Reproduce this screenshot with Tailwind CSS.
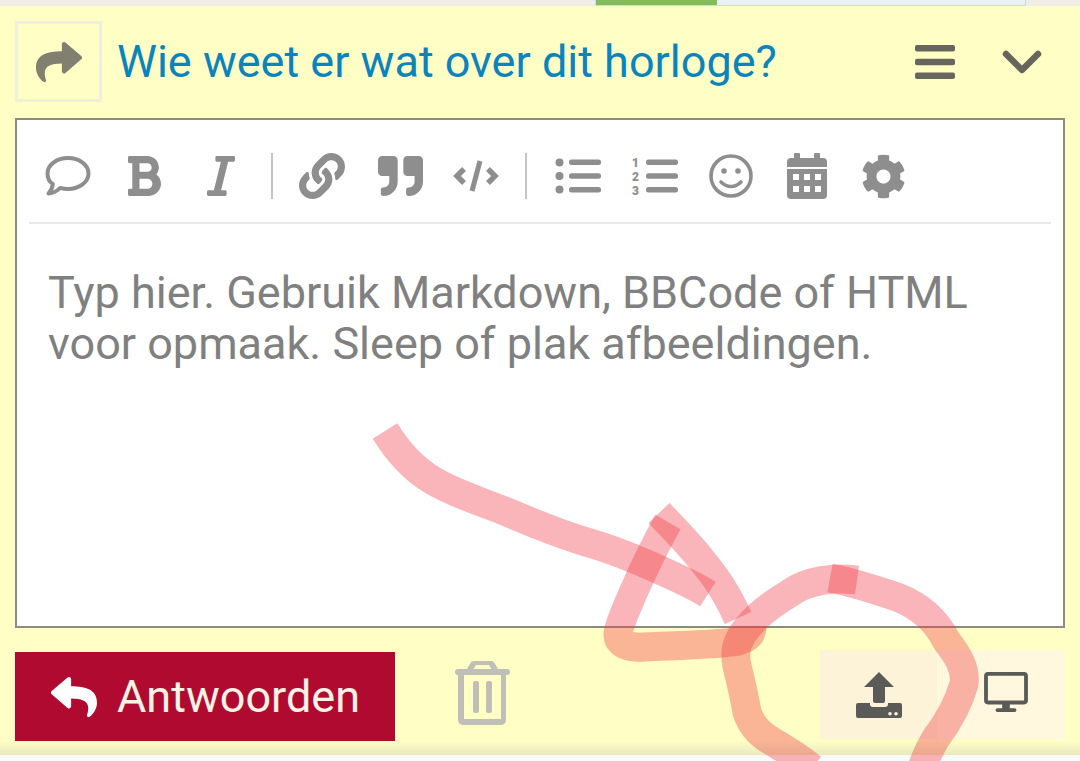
<!DOCTYPE html>
<html lang="nl">
<head>
    <meta charset="UTF-8">
    <meta name="viewport" content="width=device-width, initial-scale=1.0">
    <title>Wie weet er wat over dit horloge?</title>
    <script src="https://cdn.jsdelivr.net/npm/@tailwindcss/browser@4"></script>
</head>
<body class="bg-[#fafaf8]">
    <div class="relative w-[1080px] h-[761px] overflow-hidden font-['Roboto',sans-serif]">
        <!-- Top strip with upload progress -->
        <div class="h-[6px] bg-[#eeeee6] pl-[595px]">
            <div class="flex w-[431px] h-[6px] border border-t-0 border-[#c4dde6] bg-[#e9f1f5]">
                <div class="w-[121px] bg-[#84bb5c]"></div>
            </div>
        </div>

        <!-- Composer -->
        <div class="h-[749px] px-[15px] bg-gradient-to-b from-[#ffffc5] from-[98%] to-[#e9e9c0]">
            <!-- Title row -->
            <div class="flex items-center h-[112px] pb-[1px]">
                <div class="flex items-center justify-center w-[87px] h-[81px] border-[3px] border-[#efefdf]">
                    <svg class="w-[46px] h-[46px] text-[#807f70]" viewBox="0 0 512 512" fill="currentColor"><path d="M503.691 189.836L327.687 37.851C312.281 24.546 288 35.347 288 56.015v80.053C127.371 137.907 0 170.1 0 322.326c0 61.441 39.581 122.309 83.333 154.132 13.653 9.931 33.111-2.533 28.077-18.631C66.066 312.814 132.917 274.316 288 272.085V360c0 20.7 24.3 31.453 39.687 18.164l176.004-152c11.071-9.562 11.086-26.753 0-36.328z"/></svg>
                </div>
                <a class="ml-[15px] text-[45px] leading-none text-[#0a84bd] whitespace-nowrap">Wie weet er wat over dit horloge?</a>
                <div class="ml-auto flex items-center">
                    <svg class="w-[40px] h-[34px] text-[#66665e]" viewBox="0 0 40 34" fill="currentColor"><rect y="0" width="40" height="6.5" rx="2"/><rect y="13.750" width="40" height="6.5" rx="2"/><rect y="27.500" width="40" height="6.5" rx="2"/></svg>
                    <svg class="ml-[47px] mr-[23px] w-[40px] h-[26px] text-[#66665e]" viewBox="0 0 40 26" fill="none" stroke="currentColor" stroke-width="6.5" stroke-linecap="round" stroke-linejoin="round"><path d="M4 5l16 16L36 5"/></svg>
                </div>
            </div>

            <!-- Editor -->
            <div class="w-[1050px] h-[510px] border-2 border-[#8b8b80] bg-white px-[12px]">
                <div class="flex items-center h-[104px] pt-[10px] border-b-2 border-[#e9e9e9] text-[#8e8e8e]">
                    <div class="flex justify-center w-[77px]">
                        <svg class="w-[46px] h-[42px]" viewBox="0 0 46 42" fill="none" stroke="currentColor" stroke-width="4" stroke-linejoin="round"><path d="M23 3c11.500 0 20.500 7 20.500 15.500S34.500 34 23 34c-2.800 0-5.400-.4-7.800-1.100C12 36 8 38.500 3.500 38.500c2.500-2.800 4-6 4.300-9.300C4 26.500 2.500 22.500 2.500 18.500 2.500 10 11.500 3 23 3z"/></svg>
                    </div>
                    <div class="flex justify-center w-[77px]">
                        <svg class="w-[33px] h-[40px]" viewBox="18 32 367 448" preserveAspectRatio="none" fill="currentColor"><path d="M333.49 238a122 122 0 0 0 27-65.21C367.87 96.49 308 32 233.42 32H34a16 16 0 0 0-16 16v48a16 16 0 0 0 16 16h31.87v288H34a16 16 0 0 0-16 16v48a16 16 0 0 0 16 16h209.32c70.8 0 134.14-51.75 141-122.4 4.74-48.45-16.39-91.11-50.83-118.6zM145.66 112h87.76a48 48 0 0 1 0 96h-87.76zm87.76 288h-87.76V288h87.76a56 56 0 0 1 0 112z"/></svg>
                    </div>
                    <div class="flex justify-center w-[75px]">
                        <svg class="w-[28px] h-[40px]" viewBox="0 32 320 448" preserveAspectRatio="none" fill="currentColor"><path d="M320 48v32a16 16 0 0 1-16 16h-62.76l-80 320H208a16 16 0 0 1 16 16v32a16 16 0 0 1-16 16H16a16 16 0 0 1-16-16v-32a16 16 0 0 1 16-16h62.76l80-320H112a16 16 0 0 1-16-16V48a16 16 0 0 1 16-16h192a16 16 0 0 1 16 16z"/></svg>
                    </div>
                    <div class="flex justify-center w-[28px]"><div class="w-[2.500px] h-[46px] bg-[#c4c4c4]"></div></div>
                    <div class="flex justify-center w-[72px]">
                        <svg class="w-[46px] h-[46px]" viewBox="0 0 512 512" fill="currentColor"><path d="M326.612 185.391c59.747 59.809 58.927 155.698.36 214.59-.11.12-.24.25-.36.37l-67.2 67.2c-59.27 59.27-155.699 59.262-214.96 0-59.27-59.26-59.27-155.7 0-214.96l37.106-37.106c9.84-9.84 26.786-3.3 27.294 10.606.648 17.722 3.826 35.527 9.69 52.721 1.986 5.822.567 12.262-3.783 16.612l-13.087 13.087c-28.026 28.026-28.905 73.66-1.155 101.96 28.024 28.579 74.086 28.749 102.325.51l67.2-67.19c28.191-28.191 28.073-73.757 0-101.83-3.701-3.694-7.429-6.564-10.341-8.569a16.037 16.037 0 0 1-6.947-12.606c-.396-10.567 3.348-21.456 11.698-29.806l21.054-21.055c5.521-5.521 14.182-6.199 20.584-1.731a152.482 152.482 0 0 1 20.522 17.197zM467.547 44.449c-59.261-59.262-155.69-59.27-214.96 0l-67.2 67.2c-.12.12-.25.25-.36.37-58.566 58.892-59.387 154.781.36 214.59a152.454 152.454 0 0 0 20.521 17.196c6.402 4.468 15.064 3.789 20.584-1.731l21.054-21.055c8.35-8.35 12.094-19.239 11.698-29.806a16.037 16.037 0 0 0-6.947-12.606c-2.912-2.005-6.64-4.875-10.341-8.569-28.073-28.073-28.191-73.639 0-101.83l67.2-67.19c28.239-28.239 74.3-28.069 102.325.51 27.75 28.3 26.872 73.934-1.155 101.96l-13.087 13.087c-4.35 4.35-5.769 10.79-3.783 16.612 5.864 17.194 9.042 34.999 9.69 52.721.509 13.906 17.454 20.446 27.294 10.606l37.106-37.106c59.271-59.259 59.271-155.699.001-214.959z"/></svg>
                    </div>
                    <div class="flex justify-center w-[84px]">
                        <svg class="w-[45px] h-[40px]" viewBox="0 32 512 448" preserveAspectRatio="none" fill="currentColor"><path d="M464 32H336c-26.5 0-48 21.5-48 48v128c0 26.5 21.500 48 48 48h80v64c0 35.300-28.700 64-64 64h-8c-13.300 0-24 10.700-24 24v48c0 13.300 10.700 24 24 24h8c88.400 0 160-71.600 160-160V80c0-26.500-21.500-48-48-48zm-288 0H48C21.500 32 0 53.500 0 80v128c0 26.500 21.500 48 48 48h80v64c0 35.300-28.700 64-64 64h-8c-13.300 0-24 10.700-24 24v48c0 13.300 10.700 24 24 24h8c88.400 0 160-71.600 160-160V80c0-26.500-21.500-48-48-48z"/></svg>
                    </div>
                    <div class="flex justify-center w-[68px]">
                        <svg class="w-[46px] h-[38px]" viewBox="0 0 46 38" fill="none" stroke="currentColor" stroke-width="5.500"><path d="M11 12l-7 7 7 7M35 12l7 7-7 7" stroke-linejoin="miter"/><path d="M27 4l-8 30" stroke-width="5"/></svg>
                    </div>
                    <div class="flex justify-center w-[32px]"><div class="w-[2.500px] h-[46px] bg-[#c4c4c4]"></div></div>
                    <div class="flex justify-center w-[72px]">
                        <svg class="w-[46px] h-[36px]" viewBox="0 0 46 36" fill="currentColor"><circle cx="4.500" cy="4.500" r="4"/><circle cx="4.500" cy="18" r="4"/><circle cx="4.500" cy="31.500" r="4"/><rect x="14" y="1.500" width="32" height="5.500" rx="2.500"/><rect x="14" y="15.250" width="32" height="5.500" rx="2.500"/><rect x="14" y="29" width="32" height="5.500" rx="2.500"/></svg>
                    </div>
                    <div class="flex justify-center w-[82px]">
                        <svg class="w-[46px] h-[42px] overflow-visible" viewBox="0 0 46 42" fill="currentColor"><text x="0" y="12" font-size="12" font-weight="900" font-family="Roboto, sans-serif">1</text><text x="0" y="26" font-size="12" font-weight="900" font-family="Roboto, sans-serif">2</text><text x="0" y="40" font-size="12" font-weight="900" font-family="Roboto, sans-serif">3</text><rect x="14" y="4.500" width="32" height="5.500" rx="2.500"/><rect x="14" y="18.250" width="32" height="5.500" rx="2.500"/><rect x="14" y="32" width="32" height="5.500" rx="2.500"/></svg>
                    </div>
                    <div class="flex justify-center w-[70px]">
                        <svg class="w-[44px] h-[44px]" viewBox="0 0 44 44" fill="none" stroke="currentColor" stroke-width="3.600"><circle cx="22" cy="22" r="20"/><path d="M12 28c3 3 6.500 4.500 10 4.500s7-1.500 10-4.500" stroke-linecap="round"/><circle cx="15" cy="17" r="2.800" fill="currentColor" stroke="none"/><circle cx="29" cy="17" r="2.800" fill="currentColor" stroke="none"/></svg>
                    </div>
                    <div class="flex justify-center w-[82px]">
                        <svg class="w-[40px] h-[46px]" viewBox="0 0 40 46" fill="currentColor"><path fill-rule="evenodd" d="M8 0h4a1 1 0 0 1 1 1v4h14V1a1 1 0 0 1 1-1h4a1 1 0 0 1 1 1v4h3a4 4 0 0 1 4 4v5H0V9a4 4 0 0 1 4-4h3V1a1 1 0 0 1 1-1zM0 16h40v26a4 4 0 0 1-4 4H4a4 4 0 0 1-4-4zM6 21v6h6v-6zm11 0v6h6v-6zm11 0v6h6v-6zM6 33v6h6v-6zm11 0v6h6v-6zm11 0v6h6v-6z"/></svg>
                    </div>
                    <div class="flex justify-center w-[70px]">
                        <svg class="w-[45px] h-[45px]" viewBox="0 0 512 512" fill="currentColor"><path d="M487.4 315.7l-42.6-24.6c4.3-23.2 4.3-47 0-70.2l42.6-24.6c4.9-2.8 7.1-8.6 5.5-14-11.1-35.6-30-67.8-54.7-94.6-3.8-4.1-10-5.1-14.8-2.3L380.8 110c-17.9-15.4-38.5-27.3-60.8-35.1V25.8c0-5.6-3.9-10.5-9.4-11.7-36.7-8.2-74.3-7.8-109.2 0-5.5 1.2-9.4 6.1-9.4 11.7V75c-22.2 7.9-42.8 19.8-60.8 35.1L88.7 85.5c-4.9-2.8-11-1.9-14.8 2.3-24.7 26.7-43.6 58.9-54.7 94.6-1.7 5.4.6 11.2 5.5 14L67.3 221c-4.3 23.2-4.3 47 0 70.2l-42.6 24.6c-4.9 2.8-7.1 8.6-5.5 14 11.1 35.6 30 67.8 54.7 94.6 3.8 4.1 10 5.1 14.8 2.3l42.6-24.6c17.9 15.4 38.5 27.3 60.8 35.1v49.2c0 5.6 3.9 10.5 9.4 11.7 36.7 8.2 74.3 7.8 109.2 0 5.5-1.2 9.4-6.1 9.4-11.7v-49.2c22.2-7.9 42.8-19.8 60.8-35.1l42.6 24.6c4.9 2.8 11 1.9 14.8-2.3 24.7-26.7 43.6-58.9 54.7-94.6 1.5-5.5-.7-11.3-5.6-14.1zM256 336c-44.1 0-80-35.9-80-80s35.9-80 80-80 80 35.9 80 80-35.9 80-80 80z"/></svg>
                    </div>
                </div>
                <p class="pt-[43px] pl-[19px] text-[45px] leading-[51px] text-[#808080] whitespace-nowrap">Typ hier. Gebruik Markdown, BBCode of HTML<br>voor opmaak. Sleep of plak afbeeldingen.</p>
            </div>

            <!-- Actions -->
            <div class="flex items-start pt-[22px]">
                <button type="button" class="flex items-center w-[380px] h-[89px] mt-[2px] pl-[36px] bg-[#b00a30] text-[#fff3e6]">
                    <svg class="w-[46px] h-[46px] text-white" viewBox="0 0 512 512" fill="currentColor"><path transform="matrix(-1 0 0 1 512 0)" d="M503.691 189.836L327.687 37.851C312.281 24.546 288 35.347 288 56.015v80.053C127.371 137.907 0 170.1 0 322.326c0 61.441 39.581 122.309 83.333 154.132 13.653 9.931 33.111-2.533 28.077-18.631C66.066 312.814 132.917 274.316 288 272.085V360c0 20.7 24.3 31.453 39.687 18.164l176.004-152c11.071-9.562 11.086-26.753 0-36.328z"/></svg>
                    <span class="ml-[20px] text-[45px] leading-none">Antwoorden</span>
                </button>
                <svg class="ml-[60px] mt-[11px] w-[55px] h-[64px] text-[#bfbfb8]" viewBox="0 0 55 64" fill="currentColor"><path fill-rule="evenodd" d="M19 0h17a4 4 0 0 1 3.500 2l3.500 6h9a3 3 0 0 1 0 6h-1v45a5 5 0 0 1-5 5H8a5 5 0 0 1-5-5V14a3 3 0 0 1 0-6h9l3.500-6A4 4 0 0 1 19 0zm-.500 8h18L34 4H21zM9 14v44h37V14zm9 8a2 2 0 0 1 2-2h2a2 2 0 0 1 2 2v28a2 2 0 0 1-2 2h-2a2 2 0 0 1-2-2zm13 0a2 2 0 0 1 2-2h2a2 2 0 0 1 2 2v28a2 2 0 0 1-2 2h-2a2 2 0 0 1-2-2z"/></svg>
                <div class="ml-auto flex">
                    <div class="flex items-center justify-center w-[117px] h-[89px] bg-[#fdf3d8]">
                        <svg class="w-[46px] h-[46px] text-[#5a5a58]" viewBox="0 0 46 46" fill="currentColor"><path fill-rule="evenodd" d="M23 0l15 15H29v14a2 2 0 0 1-2 2h-8a2 2 0 0 1-2-2V15H8zM2 31h12v1a3 3 0 0 0 3 3h12a3 3 0 0 0 3-3v-1h12a2 2 0 0 1 2 2v11a2 2 0 0 1-2 2H2a2 2 0 0 1-2-2V33a2 2 0 0 1 2-2zm32 9a1.800 1.800 0 1 0 0 3.600 1.800 1.800 0 0 0 0-3.600zm6 0a1.800 1.800 0 1 0 0 3.600 1.800 1.800 0 0 0 0-3.600z"/></svg>
                    </div>
                    <div class="flex items-center justify-center w-[128px] h-[89px] pb-[5px] pl-[10px] bg-[#fff8de]">
                        <svg class="w-[46px] h-[40px] text-[#5a5a58]" viewBox="0 0 46 42" fill="currentColor"><path fill-rule="evenodd" d="M4 0h38a4 4 0 0 1 4 4v26a4 4 0 0 1-4 4H4a4 4 0 0 1-4-4V4a4 4 0 0 1 4-4zm0 4v26h38V4zM19 34h8v4h5a2 2 0 0 1 0 4H14a2 2 0 0 1 0-4h5z"/></svg>
                    </div>
                </div>
            </div>
        </div>

        <!-- Hand-drawn annotation over the composer -->
        <svg class="absolute inset-0 pointer-events-none" width="1080" height="761" viewBox="0 0 1080 761" fill="none" stroke="#f03c46" stroke-opacity="0.38" stroke-width="29">
            <path d="M385 431C398 452 412 468 432 480C455 494 480 501 507 512C535 524 565 536 593 544C620 552 640 561 660 570C678 578 694 585 708 594"/>
            <path d="M668 522C655 545 644 568 633 593C626 610 619 624 618 634C618 644 628 648 644 647C680 645 712 645 732 642C746 640 752 636 752 626" stroke-linejoin="round"/>
            <path d="M659 513C675 530 688 543 700 558C714 575 726 591 738 618"/>
            <path d="M857 580C835 577 808 580 790 593C772 604 758 614 747 628C736 642 734 652 737 666C741 682 744 695 747 712C752 728 762 736 778 745C790 752 802 760 812 768"/>
            <path d="M830 578C852 582 876 590 897 597C920 606 936 620 946 640C958 656 966 668 964 684C958 705 948 722 936 738C930 748 926 756 922 768"/>
        </svg>
    </div>
</body>
</html>
